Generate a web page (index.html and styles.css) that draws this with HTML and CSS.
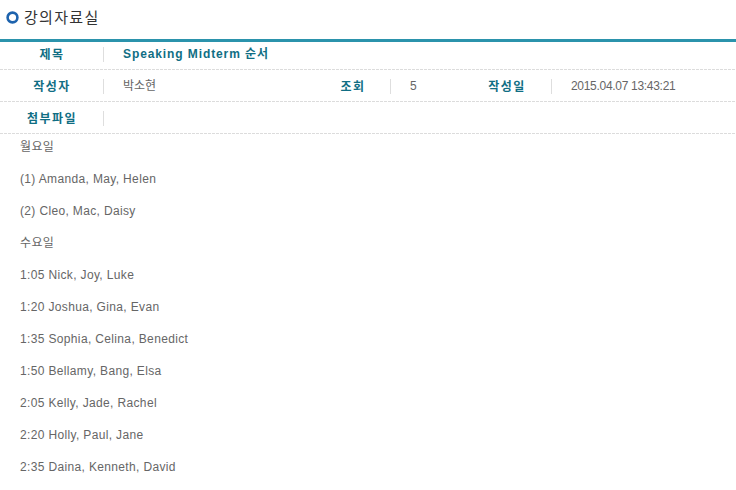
FILE: index.html
```html
<!DOCTYPE html>
<html lang="ko">
<head>
<meta charset="utf-8">
<title>강의자료실</title>
<link rel="stylesheet" href="styles.css">
</head>
<body>
<div class="page">
  <h1 class="title">
    <svg class="ring" width="13" height="13" viewBox="0 0 13 13"><circle cx="6.5" cy="6.5" r="4.9" fill="none" stroke="#1e63ad" stroke-width="2.6"/></svg>
    <span>강의자료실</span>
  </h1>
  <div class="board">
    <div class="row row-first">
      <div class="label">제목</div><div class="sep"></div>
      <div class="value subject">Speaking Midterm 순서</div>
    </div>
    <div class="row row-meta">
      <div class="label">작성자</div><div class="sep"></div>
      <div class="value">박소현</div>
      <div class="label">조회</div><div class="sep"></div>
      <div class="value">5</div>
      <div class="label">작성일</div><div class="sep"></div>
      <div class="value date">2015.04.07 13:43:21</div>
    </div>
    <div class="row">
      <div class="label">첨부파일</div><div class="sep"></div>
      <div class="value"></div>
    </div>
  </div>
  <div class="content">
    <p>월요일</p>
    <p>(1) Amanda, May, Helen</p>
    <p>(2) Cleo, Mac, Daisy</p>
    <p>수요일</p>
    <p>1:05 Nick, Joy, Luke</p>
    <p>1:20 Joshua, Gina, Evan</p>
    <p>1:35 Sophia, Celina, Benedict</p>
    <p>1:50 Bellamy, Bang, Elsa</p>
    <p>2:05 Kelly, Jade, Rachel</p>
    <p>2:20 Holly, Paul, Jane</p>
    <p>2:35 Daina, Kenneth, David</p>
  </div>
</div>
</body>
</html>
```

FILE: styles.css
```css
html, body {
  margin: 0;
  padding: 0;
  background: #fff;
}
body {
  font-family: "Liberation Sans", "Noto Sans CJK KR", sans-serif;
  font-size: 12px;
  color: #666;
}
.page {
  width: 736px;
}
.title {
  margin: 0;
  height: 39px;
  display: flex;
  align-items: flex-start;
  padding: 8px 0 0 6px;
  box-sizing: border-box;
  font-size: 15px;
  font-weight: normal;
  color: #333;
  line-height: 18px;
  letter-spacing: 1.3px;
  font-family: "Noto Sans CJK KR", sans-serif;
}
.ring {
  margin: 3px 5px 0 0;
  flex: none;
}
.board {
  border-top: 3px solid #2b93ac;
}
.row {
  display: grid;
  grid-template-columns: 103px 1px 1fr;
  align-items: center;
  height: 32px;
  box-sizing: border-box;
  background: repeating-linear-gradient(to right, #dcdcdc 0 3px, transparent 3px 4px) left bottom / 100% 1px no-repeat;
}
.row-first {
  height: 28px;
  padding-bottom: 4px;
}
.row-meta {
  grid-template-columns: 103px 1px 211px 75px 1px 71px 89px 1px 1fr;
}
.label {
  text-align: center;
  font-weight: bold;
  color: #106e84;
  font-family: "Noto Sans CJK KR", sans-serif;
  font-size: 12px;
  line-height: 16px;
  letter-spacing: 1.5px;
  padding-left: 1px;
  padding-bottom: 1px;
}
.sep {
  width: 1px;
  height: 15px;
  background: #dedede;
}
.value {
  padding-left: 19px;
  line-height: 16px;
  color: #666;
  padding-bottom: 1px;
}
.subject {
  font-weight: bold;
  color: #106e84;
  letter-spacing: 0.9px;
}
.date {
  letter-spacing: -0.3px;
}
.content {
  padding: 5px 0 0 20px;
  letter-spacing: 0.35px;
}
.content p {
  margin: 0 0 16px;
  line-height: 16px;
  height: 16px;
}
```
